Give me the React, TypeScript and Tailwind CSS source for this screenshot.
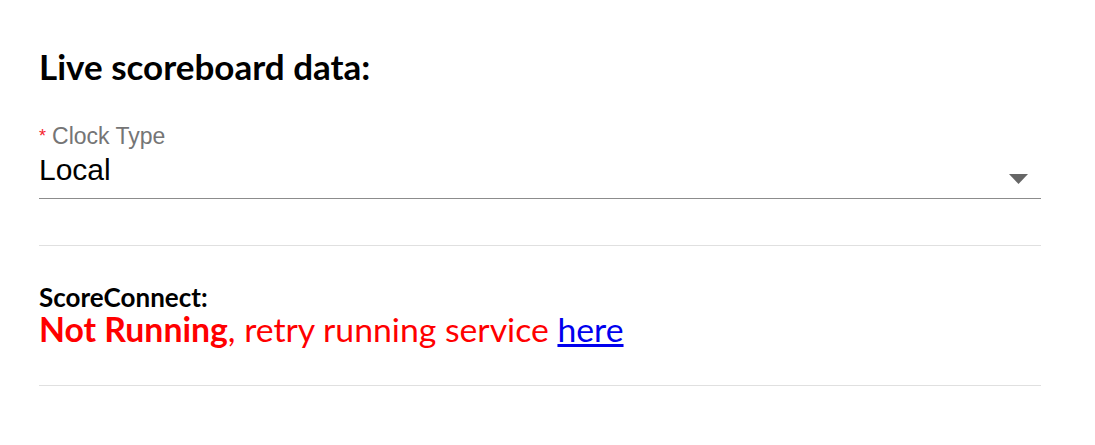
export default function App() {
  return (
    <div className="min-h-screen bg-white px-[39px] pt-[45px] font-['Lato',sans-serif]">
      <div className="w-[1002px]">
        <h2 className="text-[35px] font-bold leading-[42px] text-black">Live scoreboard data:</h2>

        <div className="mt-[36px] font-['Liberation_Sans',Arial,sans-serif]">
          <label className="block text-[23px] leading-[27px] text-[#757575]">
            <span className="mr-[6px] text-[18px] align-top text-[#f5222d]">*</span>
            Clock Type
          </label>
          <div className="mt-[2px] flex h-[47px] items-start justify-between border-b border-[#8c8c8c]">
            <span className="text-[30px] leading-[36px] text-black">Local</span>
            <svg width="19" height="10" viewBox="0 0 19 10" className="mr-[13px] mt-[22px]">
              <path d="M0 0 L19 0 L9.5 10 Z" fill="#666" />
            </svg>
          </div>
        </div>

        <div className="mt-[46px] border-t border-[#e0e0e0]" />

        <div className="pt-[37px] pb-[38px]">
          <div className="text-[26px] font-bold leading-[28px] text-black">ScoreConnect:</div>
          <div className="text-[33.75px] leading-[36px] text-[#ff0000]">
            <span className="font-bold">Not Running</span>, retry running service{' '}
            <a href="#" className="text-[#0000ee] underline">here</a>
          </div>
        </div>

        <div className="border-t border-[#e0e0e0]" />
      </div>
    </div>
  );
}
